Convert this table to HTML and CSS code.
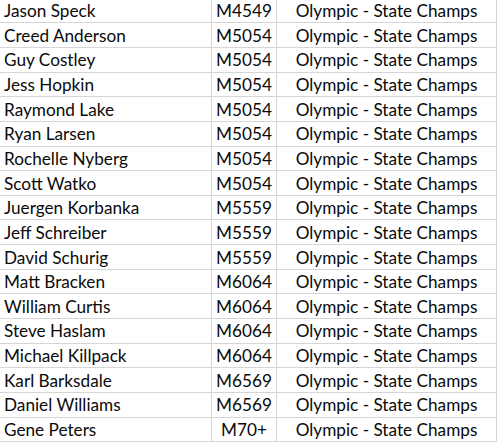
FILE: index.html
```html
<!DOCTYPE html>
<html>
<head>
<meta charset="utf-8">
<link rel="stylesheet" href="styles.css">
</head>
<body>
<div class="sheet">
  <div class="row first"><div class="c name">Jason Speck</div><div class="c div">M4549</div><div class="c ev">Olympic - State Champs</div></div>
  <div class="row"><div class="c name">Creed Anderson</div><div class="c div">M5054</div><div class="c ev">Olympic - State Champs</div></div>
  <div class="row"><div class="c name">Guy Costley</div><div class="c div">M5054</div><div class="c ev">Olympic - State Champs</div></div>
  <div class="row"><div class="c name">Jess Hopkin</div><div class="c div">M5054</div><div class="c ev">Olympic - State Champs</div></div>
  <div class="row"><div class="c name">Raymond Lake</div><div class="c div">M5054</div><div class="c ev">Olympic - State Champs</div></div>
  <div class="row"><div class="c name">Ryan Larsen</div><div class="c div">M5054</div><div class="c ev">Olympic - State Champs</div></div>
  <div class="row"><div class="c name">Rochelle Nyberg</div><div class="c div">M5054</div><div class="c ev">Olympic - State Champs</div></div>
  <div class="row"><div class="c name">Scott Watko</div><div class="c div">M5054</div><div class="c ev">Olympic - State Champs</div></div>
  <div class="row"><div class="c name">Juergen Korbanka</div><div class="c div">M5559</div><div class="c ev">Olympic - State Champs</div></div>
  <div class="row"><div class="c name">Jeff Schreiber</div><div class="c div">M5559</div><div class="c ev">Olympic - State Champs</div></div>
  <div class="row"><div class="c name">David Schurig</div><div class="c div">M5559</div><div class="c ev">Olympic - State Champs</div></div>
  <div class="row"><div class="c name">Matt Bracken</div><div class="c div">M6064</div><div class="c ev">Olympic - State Champs</div></div>
  <div class="row"><div class="c name">William Curtis</div><div class="c div">M6064</div><div class="c ev">Olympic - State Champs</div></div>
  <div class="row"><div class="c name">Steve Haslam</div><div class="c div">M6064</div><div class="c ev">Olympic - State Champs</div></div>
  <div class="row"><div class="c name">Michael Killpack</div><div class="c div">M6064</div><div class="c ev">Olympic - State Champs</div></div>
  <div class="row"><div class="c name">Karl Barksdale</div><div class="c div">M6569</div><div class="c ev">Olympic - State Champs</div></div>
  <div class="row"><div class="c name">Daniel Williams</div><div class="c div">M6569</div><div class="c ev">Olympic - State Champs</div></div>
  <div class="row"><div class="c name">Gene Peters</div><div class="c div">M70+</div><div class="c ev">Olympic - State Champs</div></div>
</div>
</body>
</html>
```
FILE: styles.css
```css
html, body {
  margin: 0;
  padding: 0;
  background: #ffffff;
  overflow: hidden;
}
.sheet {
  width: 497px;
  font-family: Lato, "Liberation Sans", sans-serif;
  font-size: 17.2px;
  color: #0a0a0a;
}
.row {
  display: grid;
  grid-template-columns: 212px 65px 220px;
  height: 24.65px;
  box-sizing: border-box;
  border-bottom: 1px solid #d6d6d6;
}
.row.first {
  height: 23.3px;
}
.c {
  display: flex;
  align-items: flex-end;
  padding-bottom: 3px;
  box-sizing: border-box;
  white-space: nowrap;
  line-height: 1;
}
.name {
  padding-left: 4px;
  border-right: 1px solid #d6d6d6;
}
.div {
  justify-content: center;
  border-right: 1px solid #d6d6d6;
}
.ev {
  justify-content: center;
  border-right: 1px solid #d6d6d6;
}
```
